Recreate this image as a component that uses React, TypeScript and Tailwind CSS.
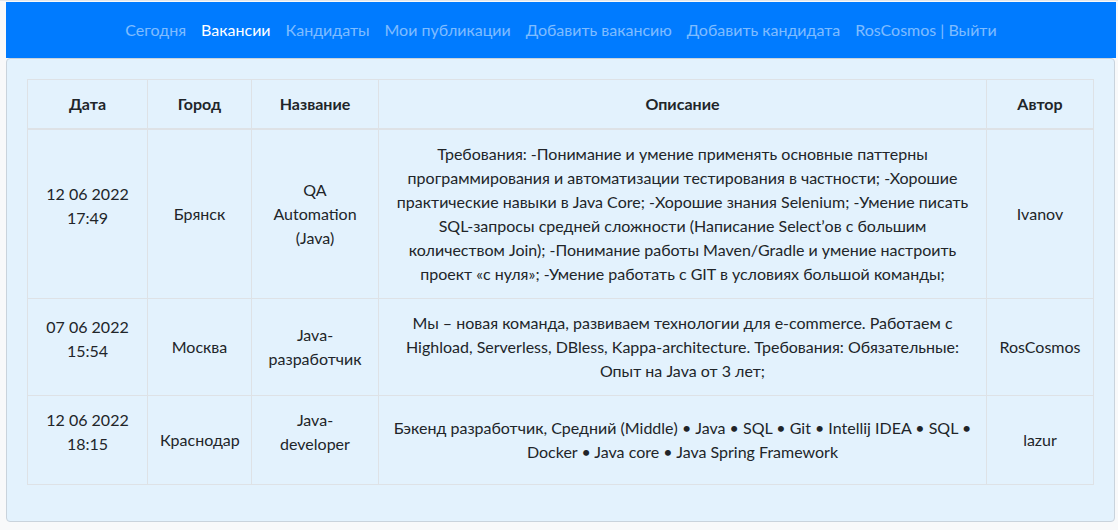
import React from 'react';

interface Vacancy {
  id: number;
  date: string;
  time: string;
  city: string;
  name: string[];
  nameGap?: boolean;
  description: string[];
  author: string;
}

const vacancies: Vacancy[] = [
  {
    id: 1,
    date: '12 06 2022',
    time: '17:49',
    city: 'Брянск',
    name: ['QA', 'Automation', '(Java)'],
    description: [
      'Требования: -Понимание и умение применять основные паттерны',
      'программирования и автоматизации тестирования в частности; -Хорошие',
      'практические навыки в Java Core; -Хорошие знания Selenium; -Умение писать',
      'SQL-запросы средней сложности (Написание Select’ов с большим',
      'количеством Join); -Понимание работы Maven/Gradle и умение настроить',
      'проект «с нуля»; -Умение работать с GIT в условиях большой команды;',
    ],
    author: 'Ivanov',
  },
  {
    id: 2,
    date: '07 06 2022',
    time: '15:54',
    city: 'Москва',
    name: ['Java-', 'разработчик'],
    description: [
      'Мы – новая команда, развиваем технологии для e-commerce. Работаем с',
      'Highload, Serverless, DBless, Kappa-architecture. Требования: Обязательные:',
      'Опыт на Java от 3 лет;',
    ],
    author: 'RosCosmos',
  },
  {
    id: 3,
    date: '12 06 2022',
    time: '18:15',
    city: 'Краснодар',
    name: ['Java-', 'developer'],
    nameGap: true,
    description: [
      'Бэкенд разработчик, Средний (Middle) • Java • SQL • Git • Intellij IDEA • SQL •',
      'Docker • Java core • Java Spring Framework',
    ],
    author: 'lazur',
  },
];

const links = ['Сегодня', 'Вакансии', 'Кандидаты', 'Мои публикации', 'Добавить вакансию', 'Добавить кандидата'];

const cell = 'border border-[#dee2e6] px-3 py-3 align-middle text-center';

export default function App() {
  return (
    <div className="min-h-[530px] bg-[#f8f9fa] border-t border-[#e3e6ea] pt-px pl-[6px] pr-[2px] font-['Lato','Liberation_Sans',sans-serif] text-base leading-6 text-[#212529]">
      <nav className="flex h-14 items-center justify-center bg-[#007bff]">
        {links.map((l) => (
          <a
            key={l}
            href="#"
            className={l === 'Вакансии' ? 'px-[7.5px] text-white' : 'px-[7.5px] text-white/50'}
          >
            {l}
          </a>
        ))}
        <a href="#" className="px-[7.5px] text-white/50">
          RosCosmos | Выйти
        </a>
      </nav>
      <div className="mr-px rounded border border-[#c9d3dc] bg-[#e3f2fd] px-5 pt-5 pb-9">
        <table className="w-full table-fixed border-collapse">
          <colgroup>
            <col className="w-[120px]" />
            <col className="w-[104px]" />
            <col className="w-[127px]" />
            <col />
            <col className="w-[107px]" />
          </colgroup>
          <thead>
            <tr className="border-b-2 border-[#dee2e6]">
              {['Дата', 'Город', 'Название', 'Описание', 'Автор'].map((h) => (
                <th key={h} className={`${cell} border-b-2 font-bold`}>
                  {h}
                </th>
              ))}
            </tr>
          </thead>
          <tbody>
            {vacancies.map((v) => (
              <tr key={v.id}>
                <td className={cell}>
                  <div className="mb-4">
                    {v.date}
                    <br />
                    {v.time}
                  </div>
                </td>
                <td className={cell}>{v.city}</td>
                <td className={cell}>
                  <div className={v.nameGap ? 'mb-4' : ''}>
                    {v.name.map((n) => (
                      <div key={n}>{n}</div>
                    ))}
                  </div>
                </td>
                <td className={cell}>
                  {v.description.map((d) => (
                    <div key={d} className="whitespace-nowrap">
                      {d}
                    </div>
                  ))}
                </td>
                <td className={cell}>{v.author}</td>
              </tr>
            ))}
          </tbody>
        </table>
      </div>
    </div>
  );
}
